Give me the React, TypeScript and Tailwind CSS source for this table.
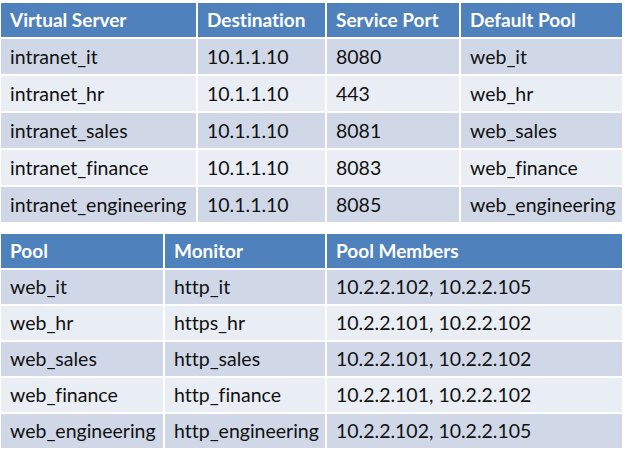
const servers = [
  ["intranet_it", "10.1.1.10", "8080", "web_it"],
  ["intranet_hr", "10.1.1.10", "443", "web_hr"],
  ["intranet_sales", "10.1.1.10", "8081", "web_sales"],
  ["intranet_finance", "10.1.1.10", "8083", "web_finance"],
  ["intranet_engineering", "10.1.1.10", "8085", "web_engineering"],
];

const pools = [
  ["web_it", "http_it", "10.2.2.102, 10.2.2.105"],
  ["web_hr", "https_hr", "10.2.2.101, 10.2.2.102"],
  ["web_sales", "http_sales", "10.2.2.101, 10.2.2.102"],
  ["web_finance", "http_finance", "10.2.2.101, 10.2.2.102"],
  ["web_engineering", "http_engineering", "10.2.2.102, 10.2.2.105"],
];

const Table = ({
  headers,
  rows,
  cols,
  rowH,
}: {
  headers: string[];
  rows: string[][];
  cols: string;
  rowH: string;
}) => (
  <div className={`grid ${cols} gap-[2px] bg-white`}>
    {headers.map((h) => (
      <div
        key={h}
        className="h-[34px] bg-[#4f81bd] pl-[9px] flex items-center text-[19px] font-bold text-white"
      >
        {h}
      </div>
    ))}
    {rows.map((row, i) =>
      row.map((cell, j) => (
        <div
          key={`${i}-${j}`}
          className={`${rowH} pl-[9px] flex items-center text-[19.5px] text-[#111] ${
            i % 2 === 0 ? "bg-[#d0d8e8]" : "bg-[#e9edf4]"
          }`}
        >
          {cell}
        </div>
      ))
    )}
  </div>
);

export default function App() {
  return (
    <div
      className="w-[625px] h-[459px] bg-white pl-[1px] pr-[3px] pt-[3px] flex flex-col gap-[12px] [font-variant-ligatures:none]"
      style={{ fontFamily: "Lato, 'Open Sans', sans-serif" }}
    >
      <Table
        headers={["Virtual Server", "Destination", "Service Port", "Default Pool"]}
        rows={servers}
        cols="grid-cols-[195px_127px_132px_1fr]"
        rowH="h-[35px]"
      />
      <Table
        headers={["Pool", "Monitor", "Pool Members"]}
        rows={pools}
        cols="grid-cols-[162px_160px_1fr]"
        rowH="h-[34px]"
      />
    </div>
  );
}
